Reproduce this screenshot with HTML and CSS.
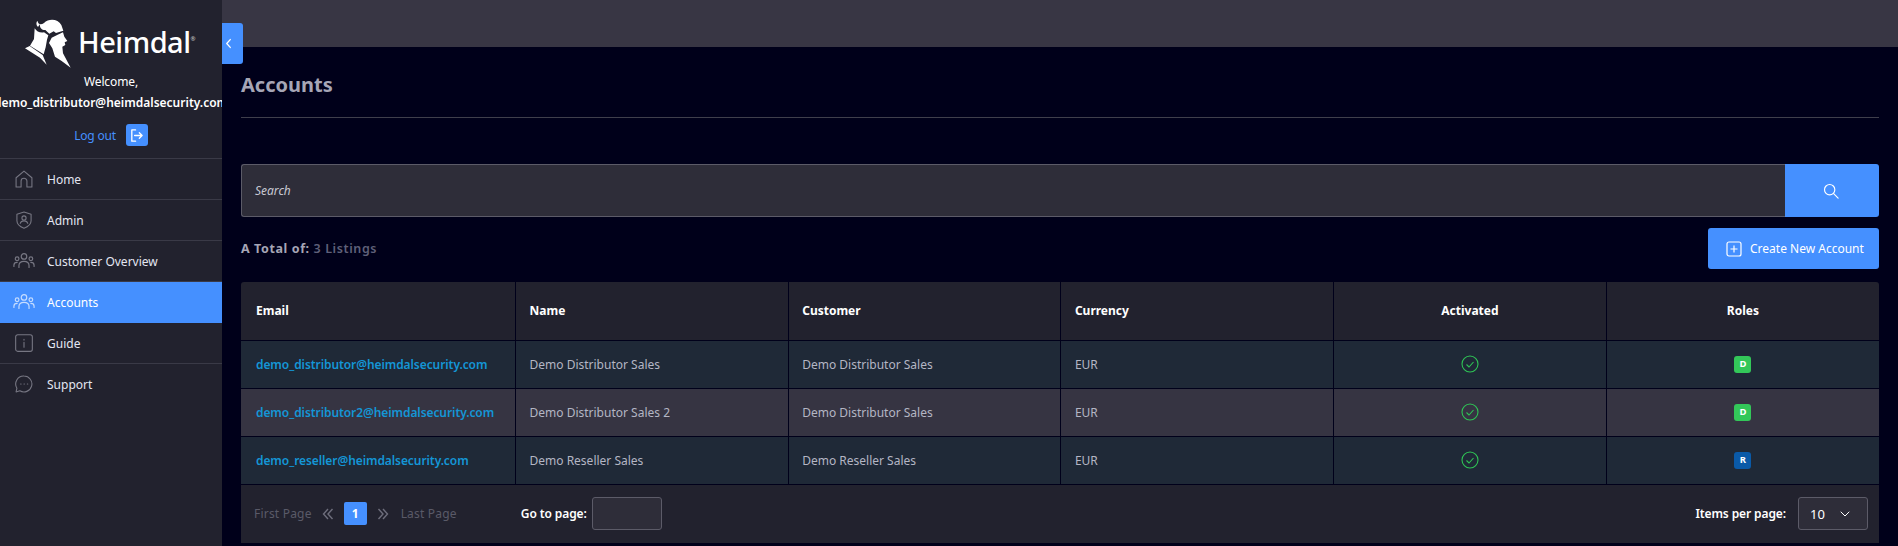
FILE: index.html
```html
<!DOCTYPE html>
<html lang="en">
<head>
<meta charset="utf-8">
<title>Accounts</title>
<link rel="stylesheet" href="styles.css">
</head>
<body>
<div class="app">
  <aside class="sidebar">
    <div class="brand">
      <svg class="brand-mark" viewBox="0 0 174 168" width="58" height="56"><path fill="#fff" d="M72 24C86 10 114 11 124 30L130 47 108 54 101 49 88 56 76 45C68 46 58 40 60 27L54 36C48 30 48 23 52 17 55 28 62 31 72 24zM44 40C50 50 60 54 72 52L85 61 81 74 77 97 71 118 30 92 42 72zM113 59L129 52 133 65 142 78 134 82 136 90 127 95 129 115 152 158 125 138 105 125 97 100 87 84 95 68zM15 100L29 93 68 120 80 149 60 128z"/></svg>
      <span class="brand-name">Heimdal<sup class="brand-reg">®</sup></span>
    </div>
    <div class="welcome">Welcome,</div>
    <div class="user">demo_distributor@heimdalsecurity.com</div>
    <div class="logout">
      <a class="logout-link">Log out</a>
      <span class="logout-btn"><svg viewBox="0 0 16 16" width="15" height="15" fill="none" stroke="#fff" stroke-width="1.4" stroke-linecap="round" stroke-linejoin="round"><path d="M7 2H3v12h4"/><path d="M6 8h8M11 5l3 3-3 3"/></svg></span>
    </div>
    <nav class="nav">
      <a class="nav-item"><svg class="nav-icon" viewBox="0 0 24 24"><path d="M2.500 10.500L12 2.500l9.500 8V21.500h-6v-7a3.500 3.500 0 0 0-7 0v7h-6z"/></svg>Home</a>
      <a class="nav-item"><svg class="nav-icon" viewBox="0 0 24 24"><path d="M12 2.500l8.500 2.500v8c0 4-3.500 7-8.500 9-5-2-8.500-5-8.500-9V5z"/><circle cx="12" cy="9.500" r="2.500"/><path d="M7.500 16c.5-2 2.500-3 4.500-3s4 1 4.500 3"/></svg>Admin</a>
      <a class="nav-item"><svg class="nav-icon nav-icon-wide" viewBox="0 0 24 20"><circle cx="12" cy="5" r="3"/><circle cx="4.500" cy="7.500" r="2"/><circle cx="19.500" cy="7.500" r="2"/><path d="M6.500 17v-2c0-3 2.500-4.500 5.500-4.500s5.500 1.500 5.500 4.500v2M1 16v-1.500c0-2 1.500-3 3.500-3M23 16v-1.500c0-2-1.500-3-3.500-3"/></svg>Customer Overview</a>
      <a class="nav-item is-active"><svg class="nav-icon nav-icon-wide" viewBox="0 0 24 20"><circle cx="12" cy="5" r="3"/><circle cx="4.500" cy="7.500" r="2"/><circle cx="19.500" cy="7.500" r="2"/><path d="M6.500 17v-2c0-3 2.500-4.500 5.500-4.500s5.500 1.500 5.500 4.500v2M1 16v-1.500c0-2 1.500-3 3.500-3M23 16v-1.500c0-2-1.500-3-3.500-3"/></svg>Accounts</a>
      <a class="nav-item"><svg class="nav-icon" viewBox="0 0 24 24"><rect x="2" y="2" width="20" height="20" rx="2.500"/><path d="M12 11v6M12 7.500v1"/></svg>Guide</a>
      <a class="nav-item"><svg class="nav-icon" viewBox="0 0 24 24"><path d="M12 2.500a9.500 9.500 0 1 1-5 17.600L2.500 21.500l1-4.500A9.500 9.500 0 0 1 12 2.500z"/><path d="M8 12h.5M12 12h.5M16 12h.5"/></svg>Support</a>
    </nav>
  </aside>
  <button class="collapse" type="button"><svg viewBox="0 0 8 12" width="7" height="11" fill="none" stroke="#fff" stroke-width="1.500" stroke-linecap="round" stroke-linejoin="round"><path d="M6 1.500L2 6l4 4.500"/></svg></button>
  <div class="main">
    <header class="topbar"></header>
    <section class="content">
      <h1 class="title">Accounts</h1>
      <hr class="rule">
      <div class="search">
        <div class="search-field">Search</div>
        <button class="search-btn" type="button"><svg viewBox="0 0 18 18" width="16" height="16" fill="none" stroke="#fff" stroke-width="1.300" stroke-linecap="round"><circle cx="7.500" cy="7.500" r="5.800"/><path d="M12 12l5 5"/></svg></button>
      </div>
      <div class="toolbar">
        <div class="total"><b>A Total of:</b> <span class="total-count">3 Listings</span></div>
        <button class="create" type="button"><svg viewBox="0 0 16 16" width="16" height="16" fill="none" stroke="#fff" stroke-width="1.200"><rect x="1" y="1" width="14" height="14" rx="2"/><path d="M8 4.500v7M4.500 8h7"/></svg>Create New Account</button>
      </div>
      <table class="grid">
        <thead>
          <tr><th>Email</th><th>Name</th><th>Customer</th><th>Currency</th><th class="center">Activated</th><th class="center">Roles</th></tr>
        </thead>
        <tbody>
          <tr><td><a class="mail">demo_distributor@heimdalsecurity.com</a></td><td>Demo Distributor Sales</td><td>Demo Distributor Sales</td><td>EUR</td><td class="center"><svg class="ok" viewBox="0 0 18 18"><circle cx="9" cy="9" r="8"/><path d="M5.500 9.500l2.500 2.500 4.500-5"/></svg></td><td class="center"><span class="role role-d">D</span></td></tr>
          <tr><td><a class="mail">demo_distributor2@heimdalsecurity.com</a></td><td>Demo Distributor Sales 2</td><td>Demo Distributor Sales</td><td>EUR</td><td class="center"><svg class="ok" viewBox="0 0 18 18"><circle cx="9" cy="9" r="8"/><path d="M5.500 9.500l2.500 2.500 4.500-5"/></svg></td><td class="center"><span class="role role-d">D</span></td></tr>
          <tr><td><a class="mail">demo_reseller@heimdalsecurity.com</a></td><td>Demo Reseller Sales</td><td>Demo Reseller Sales</td><td>EUR</td><td class="center"><svg class="ok" viewBox="0 0 18 18"><circle cx="9" cy="9" r="8"/><path d="M5.500 9.500l2.500 2.500 4.500-5"/></svg></td><td class="center"><span class="role role-r">R</span></td></tr>
        </tbody>
      </table>
      <div class="pager">
        <span class="pg-muted">First Page</span>
        <svg class="pg-arrow" viewBox="0 0 12 12"><path d="M6 1L1.500 6 6 11M10.500 1L6 6l4.500 5"/></svg>
        <span class="pg-current">1</span>
        <svg class="pg-arrow pg-arrow-next" viewBox="0 0 12 12"><path d="M1.500 1L6 6l-4.500 5M6 1l4.500 5L6 11"/></svg>
        <span class="pg-muted">Last Page</span>
        <label class="pg-label pg-goto">Go to page:</label>
        <span class="pg-input"></span>
        <label class="pg-label pg-items">Items per page:</label>
        <span class="pg-select">10<svg viewBox="0 0 10 6" width="10" height="6" fill="none" stroke="#fff" stroke-width="1" stroke-linecap="round" stroke-linejoin="round"><path d="M1 1l4 4 4-4"/></svg></span>
      </div>
    </section>
  </div>
</div>
</body>
</html>
```
FILE: styles.css
```css
* { box-sizing: border-box; }
html, body { margin: 0; height: 100%; }
body {
  background: #00001a;
  color: #fff;
  font-family: "Noto Sans", "Open Sans", sans-serif;
  font-size: 12px;
  overflow: hidden;
}
.app { display: flex; height: 546px; position: relative; }
.sidebar {
  flex: 0 0 222px;
  width: 222px;
  background: #22222e;
  overflow: hidden;
  text-align: center;
}
.brand {
  display: flex;
  align-items: center;
  height: 56px;
  margin-top: 15px;
  padding-left: 20px;
}
.brand-name {
  font-family: "Noto Sans", sans-serif;
  font-size: 29px;
  font-weight: 500;
  letter-spacing: -.5px;
  line-height: 46px;
  color: #fff;
  position: relative;
  margin-top: -3px;
}
.brand-reg { font-size: 6px; position: absolute; top: -3px; left: 100%; line-height: 46px; color: #ccc; }
.welcome { margin-top: 2px; line-height: 18px; letter-spacing: -.1px; }
.user {
  font-weight: 600;
  line-height: 18px;
  margin: 3px -20px 0;
  white-space: nowrap;
}
.logout {
  display: flex;
  align-items: center;
  justify-content: center;
  gap: 10px;
  margin-top: 12px;
  height: 22px;
}
.logout-link { color: #4590ff; letter-spacing: -.2px; }
.logout-btn {
  width: 22px; height: 22px;
  border-radius: 3px;
  background: #4590ff;
  display: flex; align-items: center; justify-content: center;
}
.nav { margin-top: 12px; border-top: 1px solid #3a3a47; }
.nav-item {
  display: flex;
  align-items: center;
  height: 41px;
  padding-left: 47px;
  position: relative;
  color: #e4e6f2;
  border-bottom: 1px solid #3a3a47;
}
.nav-item:last-child { border-bottom: 0; }
.nav-item.is-active { background: #4590ff; color: #fff; border-bottom-color: #4590ff; }
.nav-icon {
  position: absolute;
  left: 14px;
  top: 10px;
  width: 20px; height: 20px;
  fill: none;
  stroke: #777783;
  stroke-width: 1.300;
  stroke-linecap: round;
  stroke-linejoin: round;
}
.nav-icon-wide { left: 13px; width: 22px; }
.is-active .nav-icon { stroke: #c5dcff; }
.collapse {
  position: absolute;
  left: 222px; top: 23px;
  width: 21px; height: 41px;
  border: 0; padding: 0;
  border-radius: 0 3px 3px 0;
  background: #4590ff;
  display: flex; align-items: center; justify-content: center;
  padding-right: 8px;
}
.main { flex: 1; min-width: 0; }
.topbar { height: 47px; background: #383644; }
.content { padding: 0 19px 0 19px; }
.title {
  margin: 25px 0 0;
  font-size: 20px;
  line-height: 26px;
  font-weight: 700;
  color: #a6a6b6;
}
.rule { border: 0; border-top: 1px solid #3f3f4c; margin: 19px 0 0; }
.search {
  display: flex;
  height: 53px;
  margin-top: 46px;
}
.search-field {
  flex: 1;
  background: #2e2d39;
  border: 1px solid #5c5b68;
  border-right: 0;
  border-radius: 3px 0 0 3px;
  padding-left: 13px;
  line-height: 51px;
  font-size: 12px;
  font-style: italic;
  color: #c8c8d2;
}
.search-btn {
  flex: 0 0 94px;
  border: 0;
  padding: 0 2px 0 0;
  background: #4590ff;
  border-radius: 0 3px 3px 0;
  display: flex; align-items: center; justify-content: center;
}
.toolbar {
  display: flex;
  align-items: center;
  justify-content: space-between;
  margin-top: 11px;
  height: 41px;
}
.total { font-size: 12.500px; letter-spacing: .6px; color: #a6a6b6; }
.total b { font-weight: 700; }
.total-count { color: #5f6079; font-weight: 600; }
.create {
  display: flex; align-items: center; gap: 8px;
  width: 171px; height: 41px;
  padding: 0 0 0 18px;
  border: 0;
  border-radius: 3px;
  background: #4590ff;
  color: #fff;
  font: 12px "Noto Sans", "Open Sans", sans-serif;
}
.grid {
  width: 100%;
  margin-top: 13px;
  border-collapse: collapse;
  table-layout: fixed;
}
.grid th {
  height: 58px;
  background: #22222e;
  text-align: left;
  padding: 0 13.500px;
  font-weight: 700;
  font-size: 12px;
  border-right: 1px solid #00001a;
  border-bottom: 1px solid #00001a;
}
.grid th:first-child { width: 274.500px; padding-left: 15px; }
.grid td {
  height: 48px;
  padding: 0 13.500px;
  color: #b4b6c4;
  background: #1f2937;
  border-right: 1px solid #00001a;
  border-bottom: 1px solid #00001a;
}
.grid td:first-child { padding-left: 15px; }
.grid tr:nth-child(2) td { background: #363442; }
.grid th:last-child, .grid td:last-child { border-right: 0; }
.grid th:first-child { border-top-left-radius: 3px; }
.grid th:last-child { border-top-right-radius: 3px; }
.grid .center { text-align: center; }
.mail { color: #1496d6; font-weight: 600; letter-spacing: -.08px; }
.ok { width: 18px; height: 18px; fill: none; stroke: #2fc455; stroke-width: 1.100; vertical-align: middle; }
.role {
  display: inline-block;
  width: 17px; height: 17px;
  border-radius: 3px;
  font-size: 9.500px;
  font-weight: 700;
  line-height: 16px;
  text-align: center;
  vertical-align: middle;
  color: #fff;
}
.role-d { background: #33c759; }
.role-r { background: #0a5aa8; }
.pager {
  display: flex;
  align-items: center;
  height: 58px;
  background: #22222e;
  padding: 0 11px 0 13px;
}
.pg-muted { color: #5a5a68; letter-spacing: .2px; }
.pg-arrow { width: 12px; height: 12px; margin: 0 10px; fill: none; stroke: #6e6e7c; stroke-width: 1.400; }
.pg-arrow-next { margin-right: 12px; }
.pg-current {
  width: 23px; height: 23px;
  background: #4590ff;
  border-radius: 2px;
  font-weight: 700;
  text-align: center;
  line-height: 23px;
}
.pg-label { font-weight: 600; letter-spacing: -.1px; }
.pg-goto { margin-left: 64px; }
.pg-input {
  width: 70px; height: 33px;
  margin-left: 5px;
  background: #2e2d39;
  border: 1px solid #5c5b68;
  border-radius: 3px;
}
.pg-items { margin-left: auto; }
.pg-select {
  display: flex; align-items: center; justify-content: space-between;
  width: 70px; height: 33px;
  margin-left: 12px;
  padding: 0 17px 0 11px;
  background: #2e2d39;
  border: 1px solid #5c5b68;
  border-radius: 3px;
  font-size: 13px;
}
```
